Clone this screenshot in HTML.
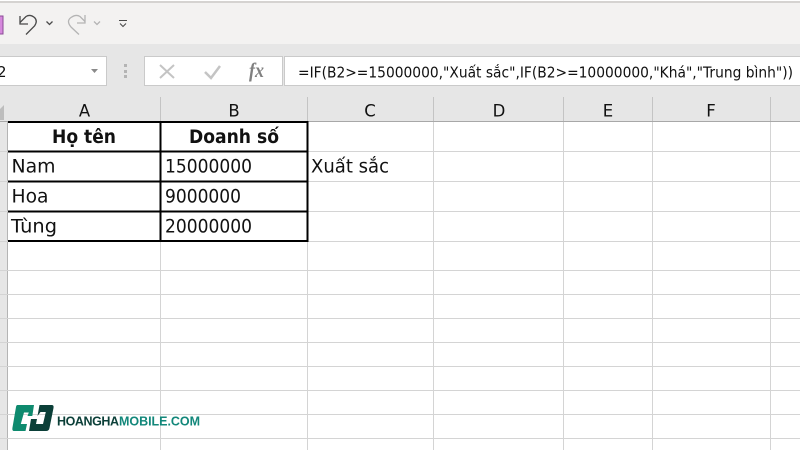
<!DOCTYPE html>
<html><head><meta charset="utf-8"><style>
html,body{margin:0;padding:0;background:#fff;width:800px;height:450px;overflow:hidden}
svg{display:block}
text{font-family:"DejaVu Sans",sans-serif;fill:#111}
</style></head><body>
<svg width="800" height="450" viewBox="0 0 800 450" xmlns="http://www.w3.org/2000/svg">
<rect width="800" height="450" fill="#fff"/>
<rect y="1" width="800" height="2" fill="#d5d3d1"/>
<rect y="3" width="800" height="41" fill="#f3f2f1"/>
<rect y="44" width="800" height="78" fill="#e6e6e6"/>
<rect x="-2" y="16" width="5" height="18" fill="#d588dc" stroke="#8b4a96" stroke-width="1"/>

<g fill="none" stroke="#4a4a4a" stroke-width="1.300">
<path d="M26 34.500L34.500 26Q38 21 34.500 17.500Q30 14 26 16.500L20 22.500"/>
<path d="M20 16V24H28"/>
<path d="M46.500 21.500L49.500 24.500L52.500 21.500"/>
<path d="M119 20.500H127M120 23.500L123 26.500L126 23.500" stroke-width="1.100"/>
</g>
<g fill="none" stroke="#b4b4b4" stroke-width="1.300">
<path d="M79 34.500L71 27Q66 21 71 17.500Q76 14 80 16.500L85 21.500"/>
<path d="M85 15V23H77"/>
<path d="M94 21.500L97 24.500L100 21.500"/>
</g>

<rect x="-2" y="56.500" width="108.500" height="29" fill="#fff" stroke="#cacaca"/>
<text x="-3" y="77" font-size="15" fill="#333">2</text>
<path d="M91 69H98L94.500 73Z" fill="#8a8a8a"/>
<g fill="#b4b4b4"><rect x="124" y="64" width="3" height="3"/><rect x="124" y="70" width="3" height="3"/><rect x="124" y="75" width="3" height="3"/></g>
<rect x="144.500" y="56.500" width="138" height="29" fill="#fff" stroke="#cacaca"/>
<rect x="284.500" y="56.500" width="520" height="29" fill="#fff" stroke="#cacaca"/>
<path d="M160 65L174 78M174 65L160 78" stroke="#c4c4c4" stroke-width="2" fill="none"/>
<path d="M205 72L211 78L220 66" stroke="#c4c4c4" stroke-width="2.500" fill="none"/>
<text x="249" y="77" font-size="21" font-style="italic" font-weight="bold" style="font-family:'Liberation Serif',serif;fill:#808080" textLength="15" lengthAdjust="spacingAndGlyphs">fx</text>
<text x="298" y="77.500" font-size="15.500" textLength="495" lengthAdjust="spacingAndGlyphs" fill="#222">=IF(B2&gt;=15000000,"Xuất sắc",IF(B2&gt;=10000000,"Khá","Trung bình"))</text>

<g stroke="#c4c4c4" fill="none">
<path d="M160.500 97V121M307.500 97V121M433.500 97V121M563.500 97V121M652.500 97V121M770.500 97V121"/>
</g>
<rect y="121" width="800" height="1" fill="#a8a8a8"/>
<path d="M4 105V120H0V109Z" fill="#bdbdbd"/>
<g font-size="16.500" text-anchor="middle" fill="#222">
<text x="84.500" y="116.500">A</text><text x="234" y="116.500">B</text><text x="370" y="116.500">C</text><text x="499" y="116.500">D</text><text x="608" y="116.500">E</text><text x="711" y="116.500">F</text>
</g>

<rect y="122" width="7" height="328" fill="#e6e6e6"/>
<rect x="7" y="122" width="1" height="328" fill="#b4b4b4"/>
<g stroke="#d4d4d4" fill="none">
<path d="M0 151.500H800M0 181.500H800M0 211.500H800M0 241.500H800M0 270.500H800M0 294.500H800M0 318.500H800M0 342.500H800M0 366.500H800M0 390.500H800M0 414.500H800M0 438.500H800"/>
<path d="M160.500 122V450M307.500 122V450M433.500 122V450M563.500 122V450M652.500 122V450M770.500 122V450"/>
</g>

<g fill="#000">
<rect x="8" y="121" width="300" height="2"/><rect x="8" y="150.500" width="300" height="2"/><rect x="8" y="180.500" width="300" height="2"/><rect x="8" y="210.500" width="300" height="2"/><rect x="8" y="240" width="300" height="2"/>
<rect x="159.500" y="121" width="2" height="121"/><rect x="306.500" y="121" width="2" height="121"/>
</g>

<g font-size="19">
<text x="52" y="143" font-weight="bold" font-size="18.500" textLength="64" lengthAdjust="spacingAndGlyphs" fill="#000">Họ tên</text>
<text x="189" y="143" font-weight="bold" font-size="18.500" textLength="90" lengthAdjust="spacingAndGlyphs" fill="#000">Doanh số</text>
<text x="11.500" y="172.500" textLength="44" lengthAdjust="spacingAndGlyphs">Nam</text>
<text x="11.500" y="202.500" textLength="37" lengthAdjust="spacingAndGlyphs">Hoa</text>
<text x="11" y="232.500" textLength="46" lengthAdjust="spacingAndGlyphs">Tùng</text>
<text x="165" y="172.500" textLength="87" lengthAdjust="spacingAndGlyphs">15000000</text>
<text x="165" y="202.500" textLength="76" lengthAdjust="spacingAndGlyphs">9000000</text>
<text x="165" y="232.500" textLength="87" lengthAdjust="spacingAndGlyphs">20000000</text>
<text x="311" y="172.500" textLength="78" lengthAdjust="spacingAndGlyphs">Xuất sắc</text>
</g>

<path d="M17.500 405H34L32.300 416H27.500L28.800 412.500H24L20.800 424H27L25.500 431H14Q12 431 12.400 428L16 407Q16.300 405 17.500 405Z" fill="#0e8a6e"/>
<path d="M39.500 405H52Q54 405 53.500 408L49.500 428Q49 431 46 431H29L31 419H37L36 424H43L45.800 412H40.500L37.500 416Z" fill="#0b3f38"/>
<text x="57" y="425.500" font-size="12.500" font-weight="bold" textLength="62" lengthAdjust="spacing" style="font-family:'Liberation Sans',sans-serif;fill:#0b3f38">HOANGHA</text>
<text x="119" y="425.500" font-size="12.500" font-weight="bold" textLength="81" lengthAdjust="spacing" style="font-family:'Liberation Sans',sans-serif;fill:#12877a">MOBILE.COM</text>
</svg>
</body></html>
